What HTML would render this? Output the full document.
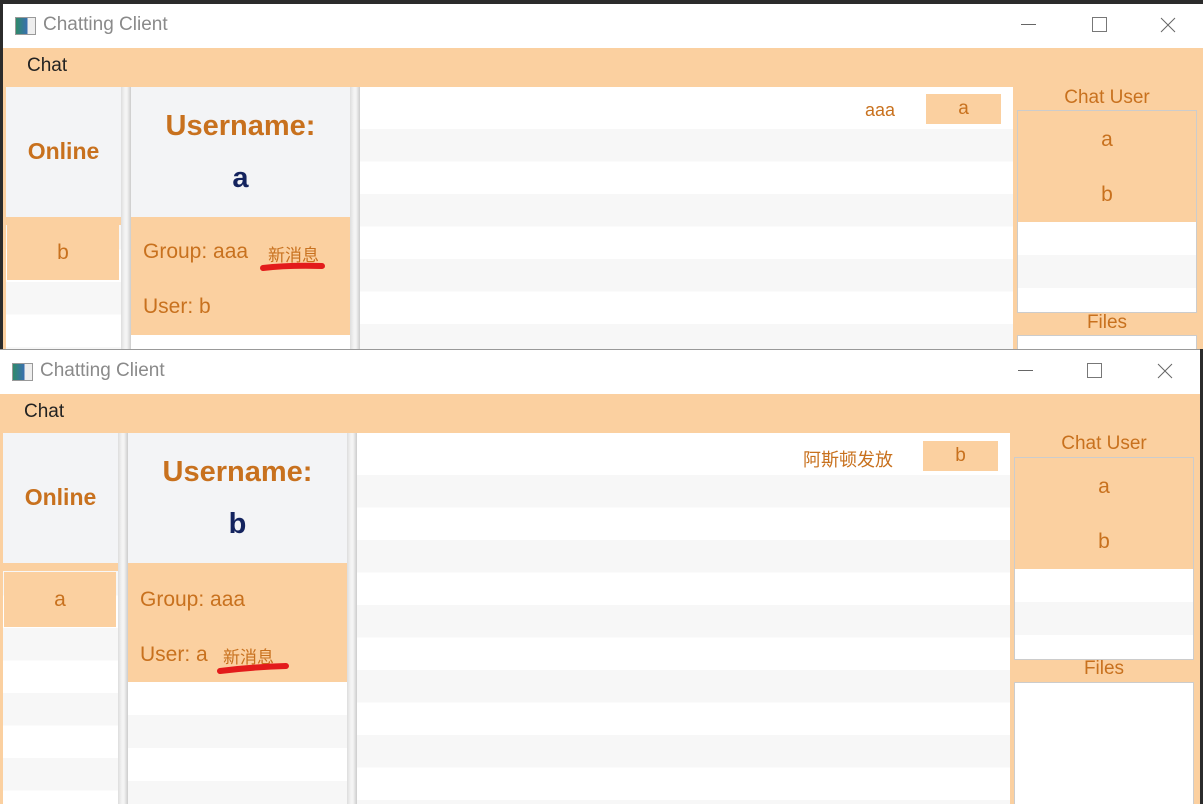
<!DOCTYPE html>
<html><head><meta charset="utf-8"><style>
*{margin:0;padding:0;box-sizing:border-box}
html,body{width:1203px;height:804px;overflow:hidden}
body{background:#2b2b2b;position:relative;font-family:"Liberation Sans","Noto Sans CJK SC",sans-serif}
.win{position:absolute;width:1200px;background:#FBD0A0;overflow:hidden}
.win div,.win span{position:absolute}
.title{left:0;top:0;width:1200px;height:44px;background:#fff}
.title .t{left:40px;top:10px;font-size:19px;color:#8a8a8a}
.icon{left:12px;top:13px;width:21px;height:18px;border:1px solid #999;background:linear-gradient(90deg,#2f8a6a,#3a6fb0 60%,#eee 60%)}
.menu{left:24px;top:51px;font-size:19px;color:#222}
.hdr{background:#F3F4F6}
.o{color:#C8711E}
.stripes{background:repeating-linear-gradient(#F7F7F7 0 32.5px,#fff 32.5px 65px)}
.stripes2{background:repeating-linear-gradient(#fff 0 33px,#F7F7F7 33px 66px)}
.split{background:linear-gradient(90deg,#ddd,#f4f4f4 40%,#f4f4f4 60%,#ccc)}
.item{background:#FBD0A0;color:#C8711E;font-size:21px;text-align:center}
</style></head><body>

<div class="win" style="left:3px;top:4px;height:345px">
 <div class="title"><div class="icon"></div><span class="t">Chatting Client</span>
  <div style="left:1018px;top:20px;width:15px;height:1px;background:#666"></div>
  <div style="left:1089px;top:13px;width:15px;height:15px;border:1px solid #777"></div>
  <svg style="position:absolute;left:1157px;top:13px" width="16" height="16"><path d="M1 1L15 15M15 1L1 15" stroke="#666" stroke-width="1"/></svg>
 </div>
 <span class="menu">Chat</span>
 <div class="stripes" style="left:3px;top:83px;width:115px;height:370px"></div>
 <div class="hdr" style="left:3px;top:83px;width:115px;height:130px"></div>
 <div style="left:3px;top:213px;width:115px;height:8px;background:#FBD0A0"></div>
 <div class="o" style="left:3px;top:134px;width:115px;text-align:center;font-size:23px;font-weight:bold">Online</div>
 <div class="item" style="left:4px;top:221px;width:112px;height:55px;line-height:55px">b</div>
 <div class="split" style="left:118px;top:83px;width:10px;height:370px"></div>
 <div class="stripes2" style="left:128px;top:331px;width:219px;height:130px"></div>
 <div class="hdr" style="left:128px;top:83px;width:219px;height:130px"></div>
 <div style="left:128px;top:213px;width:219px;height:8px;background:#FBD0A0"></div>
 <div class="o" style="left:128px;top:106px;width:219px;text-align:center;font-size:29px;font-weight:bold">Username:</div>
 <div style="left:128px;top:158px;width:219px;text-align:center;font-size:29px;font-weight:bold;color:#13235E">a</div>
 <div class="item" style="left:129px;top:221px;width:216px;height:110px"></div>
 <div class="o" style="left:140px;top:236px;font-size:21px">Group: aaa</div>
 <div class="o" style="left:265px;top:237px;font-size:17px">新消息</div>
 <svg style="position:absolute;left:255px;top:256px" width="70" height="14"><path d="M5 8Q30 5 64 6" stroke="#E31B1B" stroke-width="6" stroke-linecap="round" fill="none"/></svg>
 <div class="o" style="left:140px;top:291px;font-size:21px">User: b</div>
 <div class="split" style="left:347px;top:83px;width:10px;height:370px"></div>
 <div style="left:357px;top:83px;width:653px;height:42px;background:#fff"></div>
 <div class="stripes" style="left:357px;top:125px;width:653px;height:330px"></div>
 <div class="o" style="left:862px;top:96px;font-size:18px">aaa</div>
 <div class="item" style="left:923px;top:90px;width:75px;height:30px;line-height:30px;font-size:19px">a</div>
 <div class="o" style="left:1014px;top:83px;width:180px;text-align:center;font-size:19px">Chat User</div>
 <div style="left:1014px;top:106px;width:180px;height:203px;border:1px solid #ccc;background:#fff"></div>
 <div class="item" style="left:1015px;top:107px;width:178px;height:111px"></div>
 <div class="stripes2" style="left:1015px;top:218px;width:178px;height:90px"></div>
 <div class="o" style="left:1014px;top:124px;width:180px;text-align:center;font-size:21px">a</div>
 <div class="o" style="left:1014px;top:179px;width:180px;text-align:center;font-size:21px">b</div>
 <div class="o" style="left:1014px;top:308px;width:180px;text-align:center;font-size:19px">Files</div>
 <div style="left:1014px;top:331px;width:180px;height:100px;border:1px solid #ccc;background:#fff"></div>
</div>

<div class="win" style="left:0px;top:349px;height:455px;border-top:1px solid #999">
 <div class="title"><div class="icon"></div><span class="t">Chatting Client</span>
  <div style="left:1018px;top:20px;width:15px;height:1px;background:#666"></div>
  <div style="left:1087px;top:13px;width:15px;height:15px;border:1px solid #777"></div>
  <svg style="position:absolute;left:1157px;top:13px" width="16" height="16"><path d="M1 1L15 15M15 1L1 15" stroke="#666" stroke-width="1"/></svg>
 </div>
 <span class="menu">Chat</span>
 <div class="stripes" style="left:3px;top:83px;width:115px;height:372px"></div>
 <div class="hdr" style="left:3px;top:83px;width:115px;height:130px"></div>
 <div style="left:3px;top:213px;width:115px;height:8px;background:#FBD0A0"></div>
 <div class="o" style="left:3px;top:134px;width:115px;text-align:center;font-size:23px;font-weight:bold">Online</div>
 <div class="item" style="left:4px;top:222px;width:112px;height:55px;line-height:55px">a</div>
 <div class="split" style="left:118px;top:83px;width:10px;height:372px"></div>
 <div class="stripes2" style="left:128px;top:332px;width:219px;height:130px"></div>
 <div class="hdr" style="left:128px;top:83px;width:219px;height:130px"></div>
 <div style="left:128px;top:213px;width:219px;height:8px;background:#FBD0A0"></div>
 <div class="o" style="left:128px;top:106px;width:219px;text-align:center;font-size:29px;font-weight:bold">Username:</div>
 <div style="left:128px;top:158px;width:219px;text-align:center;font-size:29px;font-weight:bold;color:#13235E">b</div>
 <div class="item" style="left:129px;top:222px;width:216px;height:110px"></div>
 <div class="o" style="left:140px;top:238px;font-size:21px">Group: aaa</div>
 <div class="o" style="left:140px;top:293px;font-size:21px">User: a</div>
 <div class="o" style="left:223px;top:293px;font-size:17px">新消息</div>
 <svg style="position:absolute;left:212px;top:310px" width="80" height="16"><path d="M8 11Q40 7 74 6" stroke="#E31B1B" stroke-width="6" stroke-linecap="round" fill="none"/></svg>
 <div class="split" style="left:347px;top:83px;width:10px;height:372px"></div>
 <div style="left:357px;top:83px;width:653px;height:42px;background:#fff"></div>
 <div class="stripes" style="left:357px;top:125px;width:653px;height:330px"></div>
 <div class="o" style="left:803px;top:96px;font-size:18px;font-family:'Noto Sans CJK SC',sans-serif">阿斯顿发放</div>
 <div class="item" style="left:923px;top:91px;width:75px;height:30px;line-height:30px;font-size:19px">b</div>
 <div class="o" style="left:1014px;top:83px;width:180px;text-align:center;font-size:19px">Chat User</div>
 <div style="left:1014px;top:107px;width:180px;height:203px;border:1px solid #ccc;background:#fff"></div>
 <div class="item" style="left:1015px;top:108px;width:178px;height:111px"></div>
 <div class="stripes2" style="left:1015px;top:219px;width:178px;height:90px"></div>
 <div class="o" style="left:1014px;top:125px;width:180px;text-align:center;font-size:21px">a</div>
 <div class="o" style="left:1014px;top:180px;width:180px;text-align:center;font-size:21px">b</div>
 <div class="o" style="left:1014px;top:308px;width:180px;text-align:center;font-size:19px">Files</div>
 <div style="left:1014px;top:332px;width:180px;height:123px;border:1px solid #ccc;border-bottom:none;background:#fff"></div>
</div>
</body></html>
